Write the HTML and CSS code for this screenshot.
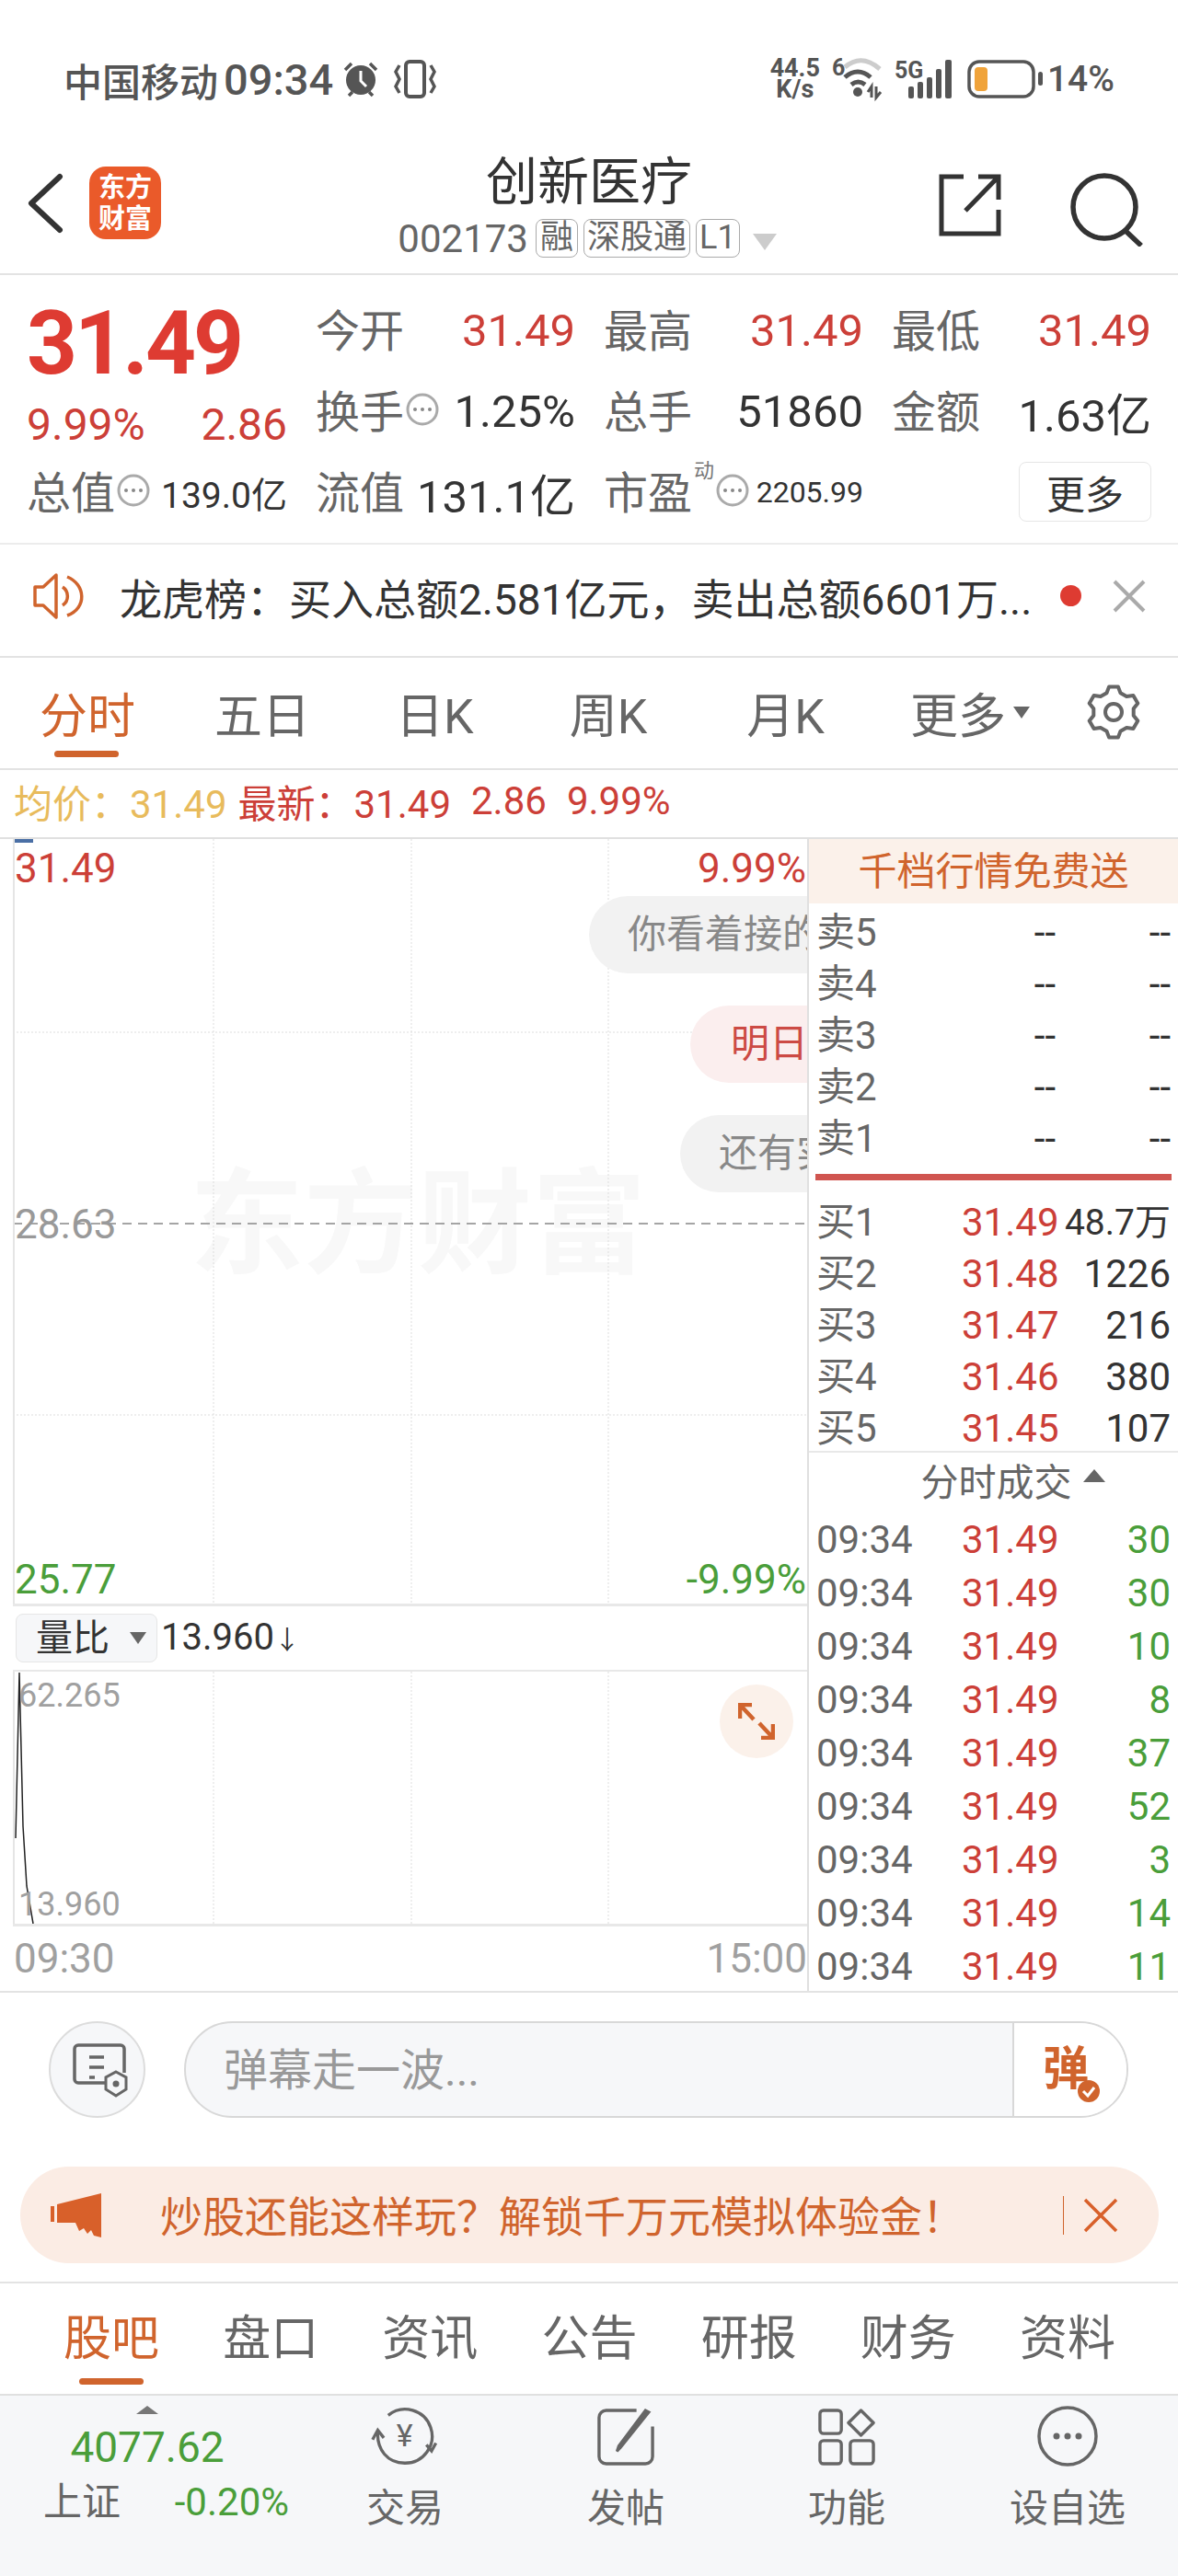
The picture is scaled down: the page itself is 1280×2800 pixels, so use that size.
FILE: index.html
```html
<!DOCTYPE html>
<html lang="zh-CN">
<head>
  <meta charset="UTF-8">
  <title>创新医疗</title>
  <link rel="stylesheet" href="styles.css">
</head>
<body>

  <div class="statusbar">
    <div class="status-left">
      <span class="carrier">中国移动</span>
      <span class="clock">09:34</span>
      <svg class="alarm-icon" viewBox="0 0 38 40"><circle cx="19" cy="21" r="16" fill="#555"/><path d="M19 11v11l6 6" fill="none" stroke="#fff" stroke-width="3"/><path d="M2 10 9 3M36 10l-7-7M6 38l4-4M32 38l-4-4" stroke="#555" stroke-width="3.5" fill="none"/></svg>
      <svg class="vibrate-icon" viewBox="0 0 48 42"><rect x="14" y="2" width="20" height="38" rx="4" fill="none" stroke="#555" stroke-width="4"/><path d="M7 6 3 13l4 8-4 8 4 7M41 6l4 7-4 8 4 8-4 7" fill="none" stroke="#555" stroke-width="3.5"/></svg>
    </div>
    <div class="status-right">
      <div class="net-speed"><span>44.5</span><span>K/s</span></div>
      <svg class="wifi-icon" viewBox="0 0 58 44">
        <text x="0" y="18" class="svg-small">6</text>
        <path d="M14 9C26 -1 38 -1 52 11" fill="none" stroke="#ccc" stroke-width="5"/>
        <path d="M14 20c9-8 19-8 28 0M21 28c5-4 10-4 15 0" fill="none" stroke="#555" stroke-width="5"/>
        <circle cx="28" cy="36" r="5" fill="#555"/>
        <path d="M43 42V30l-4 6M48 30v12l5-6" fill="none" stroke="#555" stroke-width="3"/>
      </svg>
      <svg class="signal-icon" viewBox="0 0 62 42">
        <text x="0" y="20" class="svg-small">5G</text>
        <rect x="15" y="29" width="6" height="13" rx="2" fill="#555"/>
        <rect x="25" y="24" width="6" height="18" rx="2" fill="#555"/>
        <rect x="35" y="19" width="6" height="23" rx="2" fill="#555"/>
        <rect x="45" y="10" width="6" height="32" rx="2" fill="#555"/>
        <rect x="55" y="0" width="7" height="42" rx="2" fill="#555"/>
      </svg>
      <svg class="battery-icon" viewBox="0 0 82 42"><rect x="2" y="2" width="70" height="38" rx="11" fill="none" stroke="#555" stroke-width="3.5"/><rect x="8" y="8" width="14" height="26" rx="4" fill="#f0a33a"/><rect x="77" y="13" width="5" height="15" rx="2.5" fill="#555"/></svg>
      <span class="battery-text">14%</span>
    </div>
  </div>

  <div class="navbar">
    <div class="nav-left">
      <svg class="back-icon" viewBox="0 0 40 66"><path d="M36 4 5 33l31 29" fill="none" stroke="#333" stroke-width="6" stroke-linecap="round" stroke-linejoin="round"/></svg>
      <div class="logo"><span>东方</span><span>财富</span></div>
    </div>
    <div class="nav-title">
      <h1>创新医疗</h1>
      <div class="nav-sub">
        <span class="code">002173</span>
        <span class="tag">融</span>
        <span class="tag">深股通</span>
        <span class="tag">L1</span>
        <span class="tri-down"></span>
      </div>
    </div>
    <div class="nav-right">
      <svg class="share-icon" viewBox="0 0 68 68"><path d="M27 3H3v62h62V39M43 3h22v25M65 3 29 40" fill="none" stroke="#333" stroke-width="5"/></svg>
      <svg class="search-icon" viewBox="0 0 80 80"><circle cx="38" cy="37" r="34" fill="none" stroke="#333" stroke-width="5.5"/><path d="M60 62 78 79" stroke="#333" stroke-width="5.5"/></svg>
    </div>
  </div>

  <div class="quote">
    <div class="price-box">
      <div class="price">31.49</div>
      <div class="change"><span>9.99%</span><span>2.86</span></div>
    </div>
    <div class="stat"><span class="lbl">今开</span><span class="val up">31.49</span></div>
    <div class="stat"><span class="lbl">最高</span><span class="val up">31.49</span></div>
    <div class="stat"><span class="lbl">最低</span><span class="val up">31.49</span></div>
    <div class="stat"><span class="lbl">换手</span><svg class="more-dot" viewBox="0 0 36 36"><circle cx="18" cy="18" r="16" fill="none" stroke="#aaa" stroke-width="3"/><circle cx="10" cy="18" r="2" fill="#888"/><circle cx="18" cy="18" r="2" fill="#888"/><circle cx="26" cy="18" r="2" fill="#888"/></svg><span class="val">1.25%</span></div>
    <div class="stat"><span class="lbl">总手</span><span class="val">51860</span></div>
    <div class="stat"><span class="lbl">金额</span><span class="val">1.63亿</span></div>
    <div class="stat"><span class="lbl">总值</span><svg class="more-dot" viewBox="0 0 36 36"><circle cx="18" cy="18" r="16" fill="none" stroke="#aaa" stroke-width="3"/><circle cx="10" cy="18" r="2" fill="#888"/><circle cx="18" cy="18" r="2" fill="#888"/><circle cx="26" cy="18" r="2" fill="#888"/></svg><span class="val small">139.0亿</span></div>
    <div class="stat"><span class="lbl">流值</span><span class="val">131.1亿</span></div>
    <div class="stat"><span class="lbl">市盈</span><span class="sup">动</span><svg class="more-dot" viewBox="0 0 36 36"><circle cx="18" cy="18" r="16" fill="none" stroke="#aaa" stroke-width="3"/><circle cx="10" cy="18" r="2" fill="#888"/><circle cx="18" cy="18" r="2" fill="#888"/><circle cx="26" cy="18" r="2" fill="#888"/></svg><span class="val tiny">2205.99</span></div>
    <div class="stat stat-btn"><button class="more-btn">更多</button></div>
  </div>

  <div class="notice">
    <svg class="horn-icon" viewBox="0 0 60 50"><path d="M3 15v20h9l14 13V2L12 15z" fill="none" stroke="#d0642d" stroke-width="3.5" stroke-linejoin="round"/><path d="M33 15a12 12 0 0 1 0 20M38 4c20 8 22 34 0 42" fill="none" stroke="#d0642d" stroke-width="3.5"/></svg>
    <span class="notice-text">龙虎榜：买入总额2.581亿元，卖出总额6601万...</span>
    <span class="red-dot"></span>
    <svg class="close-icon" viewBox="0 0 36 36"><path d="M2 2 34 34M34 2 2 34" stroke="#aaa" stroke-width="4"/></svg>
  </div>

  <div class="period-tabs">
    <div class="period active">分时</div>
    <div class="period">五日</div>
    <div class="period">日K</div>
    <div class="period">周K</div>
    <div class="period">月K</div>
    <div class="period period-more">更多<span class="tri-small"></span></div>
    <svg class="gear-icon" viewBox="0 0 60 60"><path d="M22.5 9.3 25.1 2.4H34.9L37.5 9.3 44.1 13.1 51.4 12 56.3 20.4 51.7 26.2V33.8L56.3 39.6 51.4 48 44.1 46.9 37.5 50.7 34.9 57.6H25.1L22.5 50.7 15.9 46.9 8.6 48 3.7 39.6 8.3 33.8V26.2L3.7 20.4 8.6 12 15.9 13.1z" fill="none" stroke="#666" stroke-width="4" stroke-linejoin="round"/><circle cx="30" cy="30" r="9" fill="none" stroke="#666" stroke-width="4"/></svg>
  </div>

  <div class="legend">
    <span class="avg">均价：31.49</span>
    <span class="up">最新：31.49</span>
    <span class="up">2.86</span>
    <span class="up">9.99%</span>
  </div>

  <div class="market">
    <div class="chart">
      <div class="chart-main">
        <div class="watermark">东方财富</div>
        <svg class="grid" viewBox="0 0 863 833">
          <path d="M218 0V833M433 0V833M647 0V833M0 210H863M0 626H863" stroke="#ddd" stroke-width="1" stroke-dasharray="2 2" fill="none"/>
          <path d="M0 418H863" stroke="#888" stroke-width="1.5" stroke-dasharray="10 7" fill="none"/>
          <rect x="2" y="0" width="20" height="4" fill="#4a6fa5"/>
        </svg>
        <span class="axis top-l up">31.49</span>
        <span class="axis top-r up">9.99%</span>
        <span class="axis mid-l">28.63</span>
        <span class="axis bot-l down">25.77</span>
        <span class="axis bot-r down">-9.99%</span>
        <div class="bubble bubble-a">你看着接的</div>
        <div class="bubble bubble-b">明日</div>
        <div class="bubble bubble-c">还有实</div>
      </div>
      <div class="indicator-bar">
        <div class="indicator-pick">量比<span class="tri-small"></span></div>
        <span class="indicator-val">13.960<span class="arrow">↓</span></span>
      </div>
      <div class="chart-sub">
        <svg class="grid" viewBox="0 0 863 274">
          <path d="M218 0V274M433 0V274M647 0V274" stroke="#ddd" stroke-width="1" stroke-dasharray="2 2" fill="none"/>
          <path d="M3 181 7 1 11 168 15 233 22 274" stroke="#222" stroke-width="1.5" fill="none"/>
        </svg>
        <span class="sub-label sub-top">62.265</span>
        <span class="sub-label sub-bot">13.960</span>
        <div class="expand">
          <svg viewBox="0 0 40 40"><path d="M2 17V2H15M2 2 17 18M38 23V38H25M38 38 23 22" fill="none" stroke="#d0642d" stroke-width="4.5"/></svg>
        </div>
      </div>
      <div class="time-axis"><span>09:30</span><span>15:00</span></div>
    </div>

    <div class="book">
      <div class="book-head">千档行情免费送</div>
      <div class="sells">
        <div class="row"><span class="row-lbl">卖5</span><span class="row-price">--</span><span class="row-qty">--</span></div>
        <div class="row"><span class="row-lbl">卖4</span><span class="row-price">--</span><span class="row-qty">--</span></div>
        <div class="row"><span class="row-lbl">卖3</span><span class="row-price">--</span><span class="row-qty">--</span></div>
        <div class="row"><span class="row-lbl">卖2</span><span class="row-price">--</span><span class="row-qty">--</span></div>
        <div class="row"><span class="row-lbl">卖1</span><span class="row-price">--</span><span class="row-qty">--</span></div>
      </div>
      <div class="book-split"></div>
      <div class="buys">
        <div class="row"><span class="row-lbl">买1</span><span class="row-price up">31.49</span><span class="row-qty qty-long">48.7万</span></div>
        <div class="row"><span class="row-lbl">买2</span><span class="row-price up">31.48</span><span class="row-qty">1226</span></div>
        <div class="row"><span class="row-lbl">买3</span><span class="row-price up">31.47</span><span class="row-qty">216</span></div>
        <div class="row"><span class="row-lbl">买4</span><span class="row-price up">31.46</span><span class="row-qty">380</span></div>
        <div class="row"><span class="row-lbl">买5</span><span class="row-price up">31.45</span><span class="row-qty">107</span></div>
      </div>
      <div class="ticks-head">分时成交<span class="tri-up"></span></div>
      <div class="ticks">
        <div class="row"><span class="row-lbl">09:34</span><span class="row-price up">31.49</span><span class="row-qty down">30</span></div>
        <div class="row"><span class="row-lbl">09:34</span><span class="row-price up">31.49</span><span class="row-qty down">30</span></div>
        <div class="row"><span class="row-lbl">09:34</span><span class="row-price up">31.49</span><span class="row-qty down">10</span></div>
        <div class="row"><span class="row-lbl">09:34</span><span class="row-price up">31.49</span><span class="row-qty down">8</span></div>
        <div class="row"><span class="row-lbl">09:34</span><span class="row-price up">31.49</span><span class="row-qty down">37</span></div>
        <div class="row"><span class="row-lbl">09:34</span><span class="row-price up">31.49</span><span class="row-qty down">52</span></div>
        <div class="row"><span class="row-lbl">09:34</span><span class="row-price up">31.49</span><span class="row-qty down">3</span></div>
        <div class="row"><span class="row-lbl">09:34</span><span class="row-price up">31.49</span><span class="row-qty down">14</span></div>
        <div class="row"><span class="row-lbl">09:34</span><span class="row-price up">31.49</span><span class="row-qty down">11</span></div>
      </div>
    </div>
  </div>

  <div class="comment-row">
    <div class="round-btn">
      <svg viewBox="0 0 62 62"><path d="M41 45H8a4 4 0 0 1-4-4V8a4 4 0 0 1 4-4h46a4 4 0 0 1 4 4v26" fill="none" stroke="#666" stroke-width="3.5"/><path d="M20 17h16M20 28h16M20 39h6" stroke="#666" stroke-width="3.5"/><path d="M49 33l11 6v13l-11 7-11-7V39z" fill="#f6f7f9" stroke="#666" stroke-width="3"/><circle cx="49" cy="46" r="3.5" fill="#666"/></svg>
    </div>
    <div class="comment-box">
      <span class="comment-hint">弹幕走一波...</span>
      <div class="comment-send">
        <span class="send-char">弹</span>
        <svg class="send-check" viewBox="0 0 26 26"><circle cx="13" cy="13" r="12" fill="#d0642d"/><path d="M7 13l5 5 7-9" fill="none" stroke="#fff" stroke-width="3"/></svg>
      </div>
    </div>
  </div>

  <div class="promo">
    <svg class="promo-horn" viewBox="0 0 55 48"><path d="M0 14h4v17H0zM7 12 55 0v48l-8-2-3-6-4 4-4-6-5 3-4-9H7z" fill="#d8602a"/></svg>
    <span class="promo-text">炒股还能这样玩？解锁千万元模拟体验金！</span>
    <span class="promo-sep"></span>
    <svg class="promo-close" viewBox="0 0 38 38"><path d="M2 2 36 36M36 2 2 36" stroke="#d8602a" stroke-width="3.5"/></svg>
  </div>

  <div class="stock-tabs">
    <div class="stock-tab active">股吧</div>
    <div class="stock-tab">盘口</div>
    <div class="stock-tab">资讯</div>
    <div class="stock-tab">公告</div>
    <div class="stock-tab">研报</div>
    <div class="stock-tab">财务</div>
    <div class="stock-tab">资料</div>
  </div>

  <div class="bottom-bar">
    <div class="index-box">
      <span class="tri-up"></span>
      <div class="index-val down">4077.62</div>
      <div class="index-row"><span class="index-name">上证</span><span class="down">-0.20%</span></div>
    </div>
    <div class="bar-item">
      <svg viewBox="0 0 80 70"><path d="M21 11A31 31 0 1 1 40 66C20 66 8 50 9 31" fill="none" stroke="#666" stroke-width="3.5"/><path d="M3 39 9 28l7 9" fill="none" stroke="#666" stroke-width="3.5"/><path d="M76 43l-5 9-6-7" fill="none" stroke="#666" stroke-width="3.5"/><text x="40" y="47" class="svg-yen">¥</text></svg>
      <span>交易</span>
    </div>
    <div class="bar-item">
      <svg class="tight" viewBox="0 0 64 64"><path d="M44 2H10a8 8 0 0 0-8 8v44a8 8 0 0 0 8 8h44a8 8 0 0 0 8-8V20" fill="none" stroke="#666" stroke-width="3.5"/><path d="M58 4 26 44l-4 4 2-6L54 2z" fill="#666" stroke="#666" stroke-width="3"/></svg>
      <span>发帖</span>
    </div>
    <div class="bar-item">
      <svg class="tight" viewBox="0 0 64 64"><rect x="2" y="2" width="24" height="26" rx="4" fill="none" stroke="#666" stroke-width="3.5"/><path d="M48 2 62 16 48 30 34 16z" fill="none" stroke="#666" stroke-width="3.5" stroke-linejoin="round"/><rect x="2" y="36" width="24" height="26" rx="4" fill="none" stroke="#666" stroke-width="3.5"/><rect x="36" y="36" width="26" height="26" rx="4" fill="none" stroke="#666" stroke-width="3.5"/></svg>
      <span>功能</span>
    </div>
    <div class="bar-item">
      <svg viewBox="0 0 66 66"><circle cx="33" cy="33" r="31" fill="none" stroke="#666" stroke-width="3.5"/><circle cx="21" cy="33" r="3.5" fill="#666"/><circle cx="33" cy="33" r="3.5" fill="#666"/><circle cx="45" cy="33" r="3.5" fill="#666"/></svg>
      <span>设自选</span>
    </div>
  </div>

</body>
</html>
```

FILE: styles.css
```css
* {
  box-sizing: border-box;
}

body {
  margin: 0;
  width: 1280px;
  height: 2800px;
  overflow: hidden;
  background: #ffffff;
  font-family: Roboto, "Noto Sans CJK SC", sans-serif;
  color: #333;
}

.up {
  color: #cc3f38;
}

.down {
  color: #4a9e3a;
}

/* status bar */
.statusbar {
  height: 150px;
  padding: 61px 69px 0 69px;
  display: flex;
  justify-content: space-between;
  align-items: flex-start;
}

.status-left,
.status-right {
  display: flex;
  align-items: center;
  height: 50px;
  color: #555;
}

.carrier {
  font-size: 42px;
  font-weight: 500;
}

.clock {
  font-size: 47px;
  font-weight: 500;
  margin-left: 6px;
}

.alarm-icon {
  width: 40px;
  height: 40px;
  margin-left: 10px;
}

.vibrate-icon {
  width: 48px;
  height: 42px;
  margin-left: 15px;
}

.net-speed {
  display: flex;
  flex-direction: column;
  align-items: center;
  font-size: 27px;
  font-weight: 700;
  line-height: 23px;
}

.wifi-icon {
  width: 58px;
  height: 44px;
  margin-left: 13px;
  overflow: visible;
}

.signal-icon {
  width: 62px;
  height: 42px;
  margin-left: 10px;
  overflow: visible;
}

.svg-small {
  font-size: 25px;
  font-weight: 700;
  fill: #555;
}

.battery-icon {
  width: 82px;
  height: 42px;
  margin-left: 17px;
}

.battery-text {
  font-size: 39px;
  font-weight: 500;
  margin-left: 5px;
}

/* navbar */
.navbar {
  height: 149px;
  border-bottom: 2px solid #e3e3e3;
  display: grid;
  grid-template-columns: 1fr auto 1fr;
}

.nav-left {
  display: flex;
  align-items: center;
  padding: 0 0 6px 29px;
}

.back-icon {
  width: 40px;
  height: 66px;
}

.logo {
  width: 78px;
  height: 79px;
  margin-left: 28px;
  background: #ea5a2a;
  border-radius: 18px;
  color: #fff;
  font-size: 29px;
  font-weight: 700;
  line-height: 34px;
  display: flex;
  flex-direction: column;
  align-items: center;
  justify-content: center;
}

.nav-title {
  display: flex;
  flex-direction: column;
  align-items: center;
}

.nav-title h1 {
  margin: 17px 0 0;
  font-size: 56px;
  font-weight: 400;
  line-height: 62px;
  color: #333;
}

.nav-sub {
  margin: 9px 4px 0 0;
  display: flex;
  align-items: center;
  height: 42px;
  color: #666;
}

.code {
  font-size: 42px;
}

.tag {
  height: 42px;
  margin-left: 6px;
  padding: 0 3px;
  border: 1px solid #aaa;
  border-radius: 8px;
  font-size: 36px;
  line-height: 38px;
}

.tag:nth-child(2) {
  margin-left: 8px;
  padding: 0 4px;
}

.tri-down {
  width: 0;
  height: 0;
  margin-left: 14px;
  margin-top: 8px;
  border-left: 13px solid transparent;
  border-right: 13px solid transparent;
  border-top: 18px solid #ccc;
}

.nav-right {
  display: flex;
  align-items: center;
  justify-content: flex-end;
  padding: 0 38px 2px 0;
}

.share-icon {
  width: 68px;
  height: 68px;
}

.search-icon {
  width: 80px;
  height: 80px;
  margin-left: 74px;
  margin-top: 10px;
}

/* quote block */
.quote {
  height: 293px;
  padding: 16px 24px 0 29px;
  border-bottom: 2px solid #ececec;
  display: grid;
  grid-template-columns: 283px 282px 282px 282px;
  grid-template-rows: 88px 88px 88px;
  column-gap: 31px;
}

.price-box {
  grid-row: 1 / 3;
}

.stat:nth-child(2) { grid-row: 1; grid-column: 2; }
.stat:nth-child(3) { grid-row: 1; grid-column: 3; }
.stat:nth-child(4) { grid-row: 1; grid-column: 4; }
.stat:nth-child(5) { grid-row: 2; grid-column: 2; }
.stat:nth-child(6) { grid-row: 2; grid-column: 3; }
.stat:nth-child(7) { grid-row: 2; grid-column: 4; }

.price {
  height: 116px;
  font-size: 96px;
  font-weight: 700;
  letter-spacing: -3px;
  line-height: 116px;
  color: #de3b32;
}

.change {
  display: flex;
  justify-content: space-between;
  height: 62px;
  font-size: 48px;
  line-height: 62px;
  color: #cc3f38;
}

.stat {
  display: flex;
  align-items: center;
}

.lbl {
  font-size: 48px;
  color: #666;
  margin-bottom: 6px;
}

.val {
  margin-left: auto;
  font-size: 49px;
}

.val.small {
  font-size: 39px;
}

.val.tiny {
  font-size: 32px;
}

.more-dot {
  width: 36px;
  height: 36px;
  margin-left: 2px;
  margin-bottom: 5px;
  flex: none;
}

.sup {
  align-self: flex-start;
  margin-top: 6px;
  margin-left: 2px;
  font-size: 22px;
  line-height: 30px;
  color: #777;
}

.stat-btn {
  justify-content: flex-end;
}

.more-btn {
  width: 144px;
  height: 65px;
  margin-bottom: 2px;
  padding: 0;
  background: #fff;
  border: 1px solid #e6e6e6;
  border-radius: 8px;
  font-family: inherit;
  font-size: 42px;
  color: #333;
}

/* notice */
.notice {
  height: 123px;
  padding: 0 35px 10px 35px;
  border-bottom: 2px solid #e3e3e3;
  display: flex;
  align-items: center;
}

.horn-icon {
  width: 60px;
  height: 50px;
}

.notice-text {
  margin-left: 35px;
  font-size: 46px;
  color: #333;
  white-space: nowrap;
}

.red-dot {
  width: 23px;
  height: 23px;
  margin-left: auto;
  border-radius: 50%;
  background: #de3b32;
}

.close-icon {
  width: 36px;
  height: 36px;
  margin-left: 34px;
}

/* period tabs */
.period-tabs {
  height: 122px;
  padding: 0 40px 0 43px;
  border-bottom: 2px solid #e3e3e3;
  display: flex;
  align-items: center;
  position: relative;
}

.period {
  font-size: 52px;
  color: #666;
  padding-bottom: 2px;
}

.period:nth-child(2) { margin-left: 86px; }
.period:nth-child(3) { margin-left: 93px; }
.period:nth-child(4) { margin-left: 104px; }
.period:nth-child(5) { margin-left: 108px; }
.period:nth-child(6) { margin-left: 93px; }

.period.active {
  color: #d0642d;
  position: relative;
}

.period.active::after {
  content: "";
  position: absolute;
  left: 16px;
  top: 79px;
  width: 70px;
  height: 7px;
  border-radius: 4px;
  background: #d0642d;
}

.period-more {
  display: flex;
  align-items: center;
}

.tri-small {
  width: 0;
  height: 0;
  margin-left: 8px;
  border-left: 9px solid transparent;
  border-right: 9px solid transparent;
  border-top: 13px solid #666;
}

.gear-icon {
  width: 60px;
  height: 60px;
  margin-left: auto;
  margin-bottom: 2px;
}

/* legend */
.legend {
  height: 73px;
  padding: 0 0 6px 15px;
  display: flex;
  align-items: center;
  gap: 22px;
  font-size: 42px;
}

.avg {
  color: #e8bb5c;
  margin-right: -10px;
}

/* chart and order book */
.market {
  display: flex;
  height: 1256px;
  border-top: 2px solid #e0e0e0;
  border-bottom: 2px solid #e3e3e3;
}

.chart {
  width: 877px;
  flex: none;
}

.chart-main,
.chart-sub {
  margin-left: 14px;
  border-left: 2px solid #e5e5e5;
  position: relative;
  overflow: hidden;
}

.chart-main {
  height: 831px;
}

.chart-sub {
  height: 274px;
}

.grid {
  position: absolute;
  left: -2px;
  top: 0;
  width: 863px;
}

.watermark {
  position: absolute;
  left: 190px;
  top: 350px;
  font-size: 124px;
  font-weight: 700;
  line-height: 140px;
  color: #f8f8f8;
  white-space: nowrap;
}

.axis {
  position: absolute;
  font-size: 44px;
  line-height: 52px;
}

.top-l { left: 0; top: 6px; }
.top-r { right: 1px; top: 6px; }
.mid-l { left: 0; top: 393px; color: #999; }
.bot-l { left: 0; top: 779px; }
.bot-r { right: 1px; top: 779px; }

.bubble {
  position: absolute;
  right: 0;
  height: 84px;
  padding-left: 42px;
  border-radius: 42px 0 0 42px;
  background: #f2f2f2;
  color: #888;
  font-size: 42px;
  line-height: 84px;
  white-space: nowrap;
  overflow: hidden;
}

.bubble-a { top: 62px; width: 237px; }
.bubble-b { top: 181px; width: 127px; padding-left: 44px; background: #fbeeee; color: #cc4a44; }
.bubble-c { top: 300px; width: 138px; }

.indicator-bar {
  height: 74px;
  margin-left: 14px;
  border-top: 3px solid #e8e8e8;
  border-bottom: 2px solid #e8e8e8;
  display: flex;
  align-items: center;
  padding-left: 3px;
}

.indicator-pick {
  width: 154px;
  height: 53px;
  padding-left: 21px;
  background: #f6f7f9;
  border: 1px solid #e6e6e6;
  border-radius: 8px;
  font-size: 40px;
  line-height: 50px;
  display: flex;
  align-items: center;
  color: #333;
}

.indicator-pick .tri-small {
  margin-left: 22px;
}

.indicator-val {
  margin-left: 4px;
  margin-bottom: 2px;
  font-size: 40px;
}

.arrow {
  font-size: 28px;
}

.sub-label {
  position: absolute;
  left: 4px;
  font-size: 36px;
  line-height: 42px;
  color: #a0a0a0;
}

.sub-top { top: 5px; }
.sub-bot { top: 232px; }

.expand {
  position: absolute;
  left: 766px;
  top: 14px;
  width: 80px;
  height: 80px;
  border-radius: 50%;
  background: #fbf1ea;
  display: flex;
  align-items: center;
  justify-content: center;
}

.expand svg {
  width: 40px;
  height: 40px;
}

.time-axis {
  height: 73px;
  margin-left: 14px;
  padding: 0 0 0 1px;
  border-top: 3px solid #e8e8e8;
  display: flex;
  justify-content: space-between;
  align-items: center;
  font-size: 44px;
  color: #a0a0a0;
}

.book {
  flex: 1;
  border-left: 2px solid #e0e0e0;
  overflow: hidden;
}

.book-head {
  height: 70px;
  background: #fbf1ea;
  color: #d0642d;
  font-size: 42px;
  line-height: 72px;
  text-align: center;
}

.sells {
  padding-top: 4px;
}

.row {
  height: 56px;
  padding: 0 8px;
  display: grid;
  grid-template-columns: 158px 102px 1fr;
  align-items: center;
  font-size: 42px;
  line-height: 56px;
  white-space: nowrap;
}

.row-lbl {
  color: #666;
}

.row-price {
  text-align: right;
}

.row-qty {
  text-align: right;
}

.qty-long {
  font-size: 39px;
}

.book-split {
  height: 7px;
  margin: 10px 7px 18px 7px;
  background: #d05550;
}

.buys {
  height: 276px;
}

.ticks-head {
  height: 68px;
  padding: 0 0 8px 42px;
  border-top: 2px solid #e8e8e8;
  display: flex;
  align-items: center;
  justify-content: center;
  font-size: 41px;
  color: #666;
}

.tri-up {
  width: 0;
  height: 0;
  display: block;
  border-left: 12px solid transparent;
  border-right: 12px solid transparent;
  border-bottom: 14px solid #666;
}

.ticks-head .tri-up {
  margin-left: 12px;
  margin-bottom: 8px;
}

.ticks .row {
  height: 58px;
}

/* comment input */
.comment-row {
  padding: 31px 54px 0 53px;
  display: flex;
  justify-content: space-between;
}

.round-btn {
  width: 105px;
  height: 105px;
  background: #f6f7f9;
  border: 2px solid #dcdcdc;
  border-radius: 50%;
  display: flex;
  align-items: center;
  justify-content: center;
}

.round-btn svg {
  width: 62px;
  height: 62px;
  margin-left: 4px;
}

.comment-box {
  width: 1026px;
  height: 105px;
  background: #f6f7f9;
  border: 2px solid #d8d8d8;
  border-radius: 53px;
  display: flex;
  overflow: hidden;
}

.comment-hint {
  flex: 1;
  padding-left: 41px;
  font-size: 48px;
  line-height: 104px;
  color: #999;
}

.comment-send {
  width: 124px;
  background: #fff;
  border-left: 2px solid #d8d8d8;
  position: relative;
}

.send-char {
  position: absolute;
  left: 31px;
  top: 20px;
  font-size: 50px;
  font-weight: 700;
  line-height: 60px;
  color: #d0642d;
}

.send-check {
  position: absolute;
  left: 68px;
  top: 61px;
  width: 26px;
  height: 26px;
}

/* promo banner */
.promo {
  width: 1237px;
  height: 105px;
  margin: 53px 0 20px 22px;
  padding: 0 44px 0 33px;
  background: #fbece4;
  border-radius: 53px;
  display: flex;
  align-items: center;
}

.promo-horn {
  width: 55px;
  height: 48px;
}

.promo-text {
  margin: 0 0 4px 64px;
  font-size: 46px;
  color: #d0642d;
  white-space: nowrap;
}

.promo-sep {
  width: 1px;
  height: 42px;
  margin-left: auto;
  background: #d0642d;
}

.promo-close {
  width: 38px;
  height: 38px;
  margin-left: 21px;
}

/* stock tabs */
.stock-tabs {
  height: 122px;
  padding: 0 68px 0 69px;
  border-top: 2px solid #e3e3e3;
  display: flex;
  justify-content: space-between;
}

.stock-tab {
  width: 104px;
  font-size: 52px;
  line-height: 122px;
  color: #666;
  position: relative;
}

.stock-tab.active {
  color: #d0642d;
}

.stock-tab.active::after {
  content: "";
  position: absolute;
  left: 17px;
  top: 103px;
  width: 70px;
  height: 7px;
  border-radius: 4px;
  background: #d0642d;
}

/* bottom bar */
.bottom-bar {
  height: 198px;
  background: #f6f7f9;
  border-top: 2px solid #e0e0e0;
  display: flex;
  align-items: flex-start;
}

.index-box {
  width: 320px;
  padding-top: 11px;
  display: flex;
  flex-direction: column;
  align-items: center;
}

.index-box .tri-up {
  border-bottom-color: #777;
  border-bottom-width: 9px;
}

.index-val {
  margin-top: 6px;
  font-size: 46px;
  line-height: 60px;
}

.index-row {
  width: 100%;
  margin-top: 4px;
  padding: 0 6px 0 47px;
  display: flex;
  justify-content: space-between;
  font-size: 42px;
  line-height: 52px;
}

.index-name {
  color: #666;
}

.bar-item {
  width: 240px;
  padding-top: 11px;
  display: flex;
  flex-direction: column;
  align-items: center;
  font-size: 42px;
  color: #666;
}

.bar-item svg {
  height: 66px;
}

.bar-item svg.tight {
  height: 62px;
  margin: 3px 0 1px;
}

.bar-item span {
  margin-top: 18px;
  line-height: 56px;
}

.svg-yen {
  font-size: 36px;
  fill: #666;
  text-anchor: middle;
}
```
